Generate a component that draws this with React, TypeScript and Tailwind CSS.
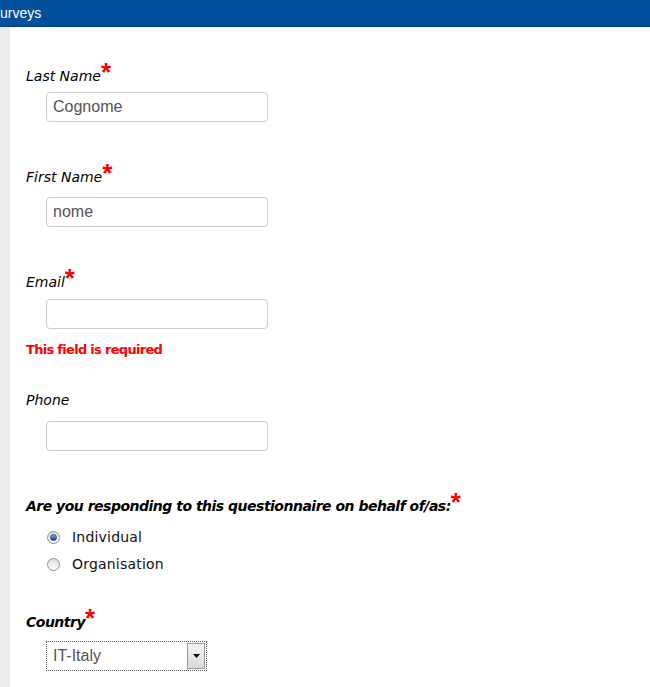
import React from "react";

const labelFont = { fontFamily: '"DejaVu Sans", Verdana, sans-serif' };

function Star() {
  return <span className="inline-block align-top h-[20px] leading-[20px] relative top-[-4px] text-[#ff0000] text-[26px] not-italic font-bold tracking-normal" style={{ fontFamily: '"Liberation Sans", Arial, sans-serif' }}>*</span>;
}

function Label({ text, req, bold }: { text: string; req?: boolean; bold?: boolean }) {
  return (
    <div className={`h-[20px] leading-[20px] text-[14px] italic text-black whitespace-nowrap ${bold ? "font-bold tracking-[-0.5px]" : ""}`} style={labelFont}>
      {text}
      {req && <Star />}
    </div>
  );
}

function Input({ value }: { value?: string }) {
  return (
    <div className="ml-[20px] w-[222px] h-[30px] border border-[#cccccc] rounded-[4px] bg-white flex items-center pl-[6px] text-[16px] text-[#555555]" style={{ fontFamily: '"Liberation Sans", Arial, sans-serif' }}>
      {value}
    </div>
  );
}

function Radio({ checked, label }: { checked?: boolean; label: string }) {
  return (
    <div className="flex items-center h-[27px] ml-[21px]">
      <div className="w-[13px] h-[13px] rounded-full border border-[#8f8f8f] bg-gradient-to-b from-[#e0e0e0] to-[#fbfbfb] flex items-center justify-center">
        {checked && <div className="w-[7px] h-[7px] rounded-full bg-gradient-to-b from-[#6ec0e8] to-[#15467a] border border-[#24407a]" />}
      </div>
      <span className="ml-[12px] text-[14px] text-[#111] tracking-[0.2px]" style={labelFont}>{label}</span>
    </div>
  );
}

export default function App() {
  return (
    <div className="w-[650px] h-[687px] bg-white overflow-hidden flex flex-col">
      <div className="h-[27px] bg-[#00509b] border-b border-[#003f7d] flex items-center text-white text-[14px] pl-0 shrink-0" style={{ fontFamily: '"Liberation Sans", Arial, sans-serif' }}>
        urveys
      </div>
      <div className="flex flex-1">
        <div className="w-[10px] bg-[#ececec] shrink-0" />
        <div className="pl-[16px] flex flex-col">
          <div className="mt-[39px]"><Label text="Last Name" req /></div>
          <div className="mt-[6px]"><Input value="Cognome" /></div>

          <div className="mt-[45px]"><Label text="First Name" req /></div>
          <div className="mt-[10px]"><Input value="nome" /></div>

          <div className="mt-[45px]"><Label text="Email" req /></div>
          <div className="mt-[7px]"><Input /></div>
          <div className="mt-[12px] text-[13px] font-bold text-[#ff0000] leading-[18px] tracking-[-0.7px]" style={labelFont}>This field is required</div>

          <div className="mt-[31px]"><Label text="Phone" /></div>
          <div className="mt-[11px]"><Input /></div>

          <div className="mt-[45px]"><Label text="Are you responding to this questionnaire on behalf of/as:" req bold /></div>
          <div className="mt-[8px]">
            <Radio checked label="Individual" />
            <Radio label="Organisation" />
          </div>

          <div className="mt-[34px]"><Label text="Country" req bold /></div>
          <div className="mt-[9px] ml-[20px] w-[161px] h-[30px] border border-dotted border-[#555] bg-white flex items-center" style={{ fontFamily: '"Liberation Sans", Arial, sans-serif' }}>
            <span className="flex-1 pl-[6px] text-[16px] text-[#555555]">IT-Italy</span>
            <div className="w-[18px] h-[26px] mr-[1px] border border-[#9a9a9a] bg-gradient-to-b from-[#f4f4f4] to-[#d9d9d9] flex items-center justify-center">
              <svg width="7" height="4" viewBox="0 0 7 4"><path d="M0 0h7L3.5 4z" fill="#000" /></svg>
            </div>
          </div>
        </div>
      </div>
    </div>
  );
}
